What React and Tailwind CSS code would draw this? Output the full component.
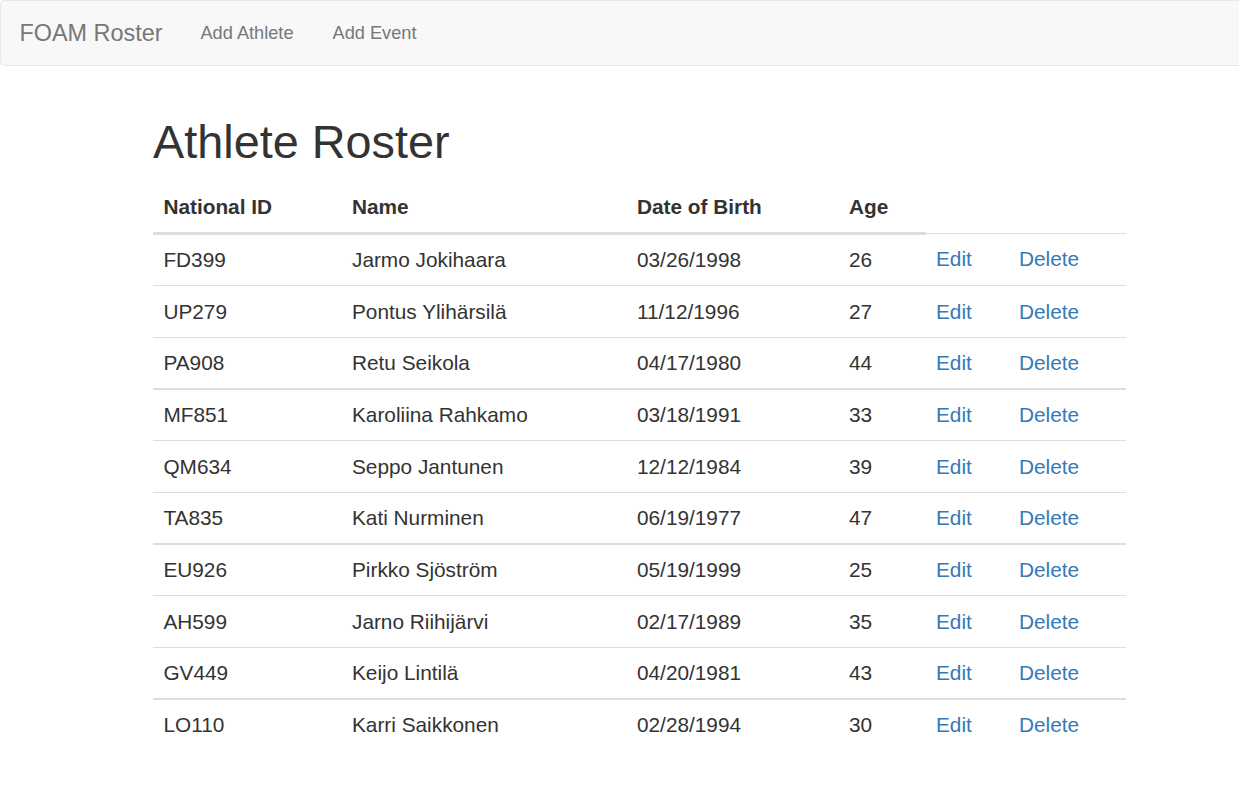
const groups = [
  [
    ['FD399', 'Jarmo Jokihaara', '03/26/1998', 26],
    ['UP279', 'Pontus Ylihärsilä', '11/12/1996', 27],
    ['PA908', 'Retu Seikola', '04/17/1980', 44],
  ],
  [
    ['MF851', 'Karoliina Rahkamo', '03/18/1991', 33],
    ['QM634', 'Seppo Jantunen', '12/12/1984', 39],
    ['TA835', 'Kati Nurminen', '06/19/1977', 47],
  ],
  [
    ['EU926', 'Pirkko Sjöström', '05/19/1999', 25],
    ['AH599', 'Jarno Riihijärvi', '02/17/1989', 35],
    ['GV449', 'Keijo Lintilä', '04/20/1981', 43],
  ],
  [['LO110', 'Karri Saikkonen', '02/28/1994', 30]],
]

const cell = 'px-[10.4px] leading-[29.7px] text-left align-top'

export default function App() {
  return (
    <div className="min-h-screen bg-white text-[#333] font-['Liberation_Sans',Arial,sans-serif]">
      {/* Navbar */}
      <nav className="h-[66px] flex items-center bg-[#f8f8f8] border border-r-0 border-[#e7e7e7] rounded-l-[5px]">
        <a className="px-[19.5px] text-[23.4px] text-[#777] leading-[26px] -ml-px">FOAM Roster</a>
        <a className="px-[19.5px] text-[18.2px] text-[#777] leading-[26px] -ml-px">Add Athlete</a>
        <a className="px-[19.5px] text-[18.2px] text-[#777] leading-[26px]">Add Event</a>
      </nav>

      <div className="ml-[153px] w-[973px] pt-[25px]">
        <h1 className="mt-[26px] mb-[13px] text-[46.8px] leading-[51.5px] font-normal">Athlete Roster</h1>
        <table className="w-full border-collapse text-[20.8px]">
          <colgroup>
            <col className="w-[188.6px]" />
            <col className="w-[285px]" />
            <col className="w-[212px]" />
            <col className="w-[87px]" />
            <col className="w-[83px]" />
            <col />
          </colgroup>
          <thead>
            <tr>
              {['National ID', 'Name', 'Date of Birth', 'Age'].map(h => (
                <th key={h} className={`${cell} py-[10.4px] font-bold border-b-[3px] border-[#ddd] align-bottom`}>{h}</th>
              ))}
            </tr>
          </thead>
          {groups.map((g, gi) => (
            <tbody key={gi} className={gi > 0 ? 'border-t-2 border-[#ddd]' : ''}>
              {g.map(([id, name, dob, age], ri) => {
                // rows opening a later group sit on a 2px rule; trim a little so the pitch holds
                const pad = gi > 0 && ri === 0 ? 'pt-[9.9px] pb-[10.4px]' : 'py-[10.4px]'
                const td = `${cell} ${pad} border-t border-[#ddd]`
                return (
                  <tr key={id}>
                    <td className={td}>{id}</td>
                    <td className={td}>{name}</td>
                    <td className={td}>{dob}</td>
                    <td className={td}>{age}</td>
                    <td className={td}>
                      <a className="text-[#337ab7]">Edit</a>
                    </td>
                    <td className={td}>
                      <a className="text-[#337ab7]">Delete</a>
                    </td>
                  </tr>
                )
              })}
            </tbody>
          ))}
        </table>
      </div>
    </div>
  )
}
